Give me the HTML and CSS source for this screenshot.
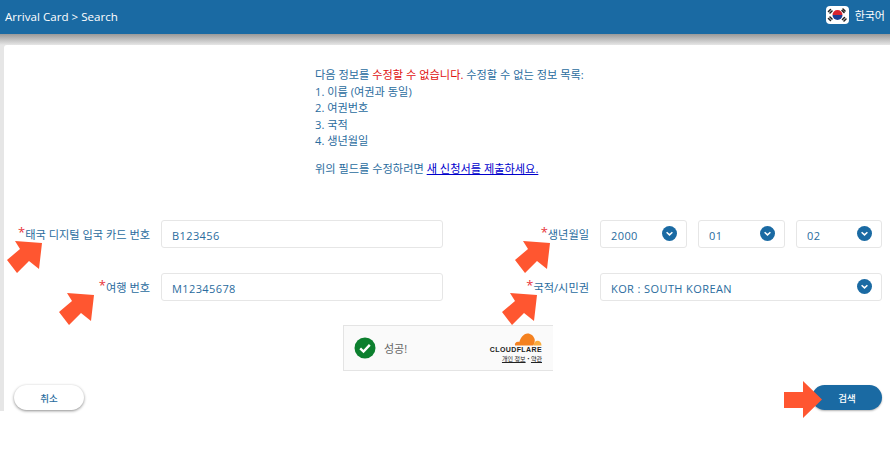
FILE: index.html
```html
<!DOCTYPE html>
<html lang="ko">
<head>
<meta charset="utf-8">
<title>Arrival Card</title>
<link rel="stylesheet" href="styles.css">
</head>
<body>
<header class="topbar">
  <div class="crumb">Arrival Card &gt; Search</div>
  <div class="lang">
    <svg class="flag" width="23" height="18" viewBox="0 0 23 18">
      <rect width="23" height="18" rx="4" fill="#fff"/>
      <path d="M6.500 9a5 5 0 0 1 10 0z" fill="#d8232f"/>
      <path d="M6.500 9a5 5 0 0 0 10 0z" fill="#1b3f94"/>
      <g stroke="#222" stroke-width="1.600" stroke-linecap="round">
        <path d="M2.500 5.500l2-2M4 7l2-2M17 3l2 2M16 4.500l2 2M2.500 12.500l2 2M4 11l2 2M16.500 13.500l2-2M18 15l2-2"/>
      </g>
    </svg>
    <span>한국어</span>
  </div>
</header>
<div class="shell">
  <main class="card">
    <section class="notice">
      <p>다음 정보를 <span class="red">수정할 수 없습니다.</span> 수정할 수 없는 정보 목록:</p>
      <p>1. 이름 (여권과 동일)</p>
      <p>2. 여권번호</p>
      <p>3. 국적</p>
      <p>4. 생년월일</p>
      <p class="gap">위의 필드를 수정하려면 <a href="#">새 신청서를 제출하세요.</a></p>
    </section>

    <form class="form">
      <div class="row">
        <label class="label left"><i>*</i>태국 디지털 입국 카드 번호</label>
        <div class="field wide">B123456</div>
        <label class="label right"><i>*</i>생년월일</label>
        <div class="selects">
          <div class="field sel">2000<svg class="chev" viewBox="0 0 14 14"><circle cx="7" cy="7" r="7"/><path d="M4.300 5.800L7 8.300l2.700-2.500"/></svg></div>
          <div class="field sel">01<svg class="chev" viewBox="0 0 14 14"><circle cx="7" cy="7" r="7"/><path d="M4.300 5.800L7 8.300l2.700-2.500"/></svg></div>
          <div class="field sel">02<svg class="chev" viewBox="0 0 14 14"><circle cx="7" cy="7" r="7"/><path d="M4.300 5.800L7 8.300l2.700-2.500"/></svg></div>
        </div>
      </div>
      <div class="row">
        <label class="label left"><i>*</i>여행 번호</label>
        <div class="field wide">M12345678</div>
        <label class="label right"><i>*</i>국적/시민권</label>
        <div class="field sel country">KOR : SOUTH KOREAN<svg class="chev" viewBox="0 0 14 14"><circle cx="7" cy="7" r="7"/><path d="M4.300 5.800L7 8.300l2.700-2.500"/></svg></div>
      </div>
    </form>

    <div class="turnstile">
      <svg class="ok" width="22" height="22" viewBox="0 0 22 22"><circle cx="11" cy="11" r="10.500" fill="#0c7f2e"/><path d="M6.200 11.300l3.300 3.200 6.300-6.600" fill="none" stroke="#fff" stroke-width="2.400"/></svg>
      <span class="ok-text">성공!</span>
      <div class="cf">
        <svg class="cloud" width="28" height="13" viewBox="0 0 28 13"><path d="M1 12.500c-.6-2 .8-3.800 3-3.800.5 0 1 .1 1.300.3C6.500 5 9.500.5 13.500.5c3.500 0 6 2.300 7 5.200.9 1.900-.6 6.800-1.500 6.800z" fill="#f48120"/><path d="M19.500 12.500c.4-2.800 2-4.800 4-4.800 2.200 0 4 2 4 4.800z" fill="#faad3f"/></svg>
        <div class="cf-name">CLOUDFLARE</div>
        <div class="cf-links"><u>개인 정보</u> • <u>약관</u></div>
      </div>
    </div>

    <div class="actions">
      <button type="button" class="btn cancel">취소</button>
      <button type="button" class="btn search">검색</button>
    </div>

    <svg class="arrow a1" width="37" height="34" viewBox="0 0 37 34"><path d="M9 1l27 2-3 26-10-8-12 12L1 20l13-11z"/></svg>
    <svg class="arrow a2" width="37" height="34" viewBox="0 0 37 34"><path d="M9 1l27 2-3 26-10-8-12 12L1 20l13-11z"/></svg>
    <svg class="arrow a3" width="37" height="34" viewBox="0 0 37 34"><path d="M9 1l27 2-3 26-10-8-12 12L1 20l13-11z"/></svg>
    <svg class="arrow a4" width="37" height="34" viewBox="0 0 37 34"><path d="M9 1l27 2-3 26-10-8-12 12L1 20l13-11z"/></svg>
    <svg class="arrow a5" width="38" height="37" viewBox="0 0 38 37"><path d="M0 11h19V0l19 18.500L19 37V27H0z"/></svg>
  </main>
</div>
</body>
</html>
```
FILE: styles.css
```css
* { box-sizing: border-box; }
html, body { margin: 0; padding: 0; background: #fff; }
body {
  width: 890px;
  height: 454px;
  overflow: hidden;
  font-family: "Open Sans", "Noto Sans CJK KR", sans-serif;
  font-size: 11px;
  color: #2a6c9e;
}
.topbar {
  height: 34px;
  background: #1a6aa3;
  color: #fff;
  display: flex;
  align-items: center;
  justify-content: space-between;
  padding: 0 5px 2px;
}
.crumb { font-size: 11.600px; }
.lang { display: flex; align-items: center; gap: 6px; font-size: 11px; margin-top: -2px; }
.flag { display: block; }
.shell {
  height: 377px;
  background: linear-gradient(#999, #e6e6e6 11px);
  padding: 11px 0 0 4px;
}
.card {
  position: relative;
  height: 366px;
  background: #fff;
  border-radius: 3px 0 0 0;
}
.notice {
  padding: 22px 0 0 311px;
  height: 175px;
  line-height: 16.500px;
  font-size: 11.200px;
}
.notice p { margin: 0; }
.notice .gap { margin-top: 11px; }
.red { color: #e01010; }
.notice a { color: #00c; text-decoration: underline; }
.form { display: flex; flex-direction: column; gap: 25px; }
.row { display: flex; align-items: flex-start; height: 28px; }
.label { font-size: 11.200px; text-align: right; line-height: 29px; white-space: nowrap; }
.label i { color: #e8343a; font-style: normal; font-size: 13px; line-height: 1; vertical-align: 2px; }
.left { width: 146px; }
.right { width: 146px; }
.field {
  height: 28px;
  border: 1px solid #e6e6e6;
  border-radius: 3px;
  background: #fff;
  padding: 1px 10px 0;
  line-height: 28px;
  font-size: 11px;
  letter-spacing: .4px;
}
.wide { width: 282px; margin-left: 11px; }
.selects { display: flex; gap: 11px; margin-left: 11px; }
.sel { width: 87px; position: relative; }
.selects .sel:last-child { width: 86px; }
.country { width: 282px; margin-left: 11px; }
.chev { position: absolute; right: 9px; top: 5px; width: 15px; height: 15px; }
.chev circle { fill: #1a6aa3; }
.chev path { fill: none; stroke: #fff; stroke-width: 1.400; }
.turnstile {
  width: 210px;
  height: 46px;
  margin: 24px 0 0 339px;
  background: #fafafa;
  border: 1px solid #e4e4e4;
  border-width: 1px 0 1px 1px;
  display: flex;
  align-items: center;
  padding: 0 11px 0 10px;
}
.ok-text { margin-left: 8px; font-size: 11px; color: #666; }
.cf { margin-left: auto; display: flex; flex-direction: column; align-items: flex-end; color: #222; }
.cloud { display: block; }
.cf-name { font: 700 7px/8px "Liberation Sans", sans-serif; letter-spacing: .4px; }
.cf-links { font-size: 6px; line-height: 8px; margin-top: 1px; }
.actions {
  display: flex;
  justify-content: space-between;
  padding: 0 8px 0 10px;
  margin-top: 14px;
}
.btn {
  width: 70px;
  height: 25px;
  border: 0;
  border-radius: 13px;
  font: 500 9.500px "Open Sans", "Noto Sans CJK KR", sans-serif;
}
.cancel { background: #fff; color: #2a6c9e; box-shadow: 0 1px 3px rgba(0,0,0,.45); }
.search { background: #1a6aa3; color: #fff; box-shadow: 0 1px 2px rgba(0,0,0,.3); }
.arrow { position: absolute; }
.arrow path { fill: #ff5630; }
.a1 { left: 2px; top: 195px; }
.a2 { left: 54px; top: 247px; }
.a3 { left: 510px; top: 195px; }
.a4 { left: 497px; top: 247px; }
.a5 { left: 780px; top: 336px; }
```
